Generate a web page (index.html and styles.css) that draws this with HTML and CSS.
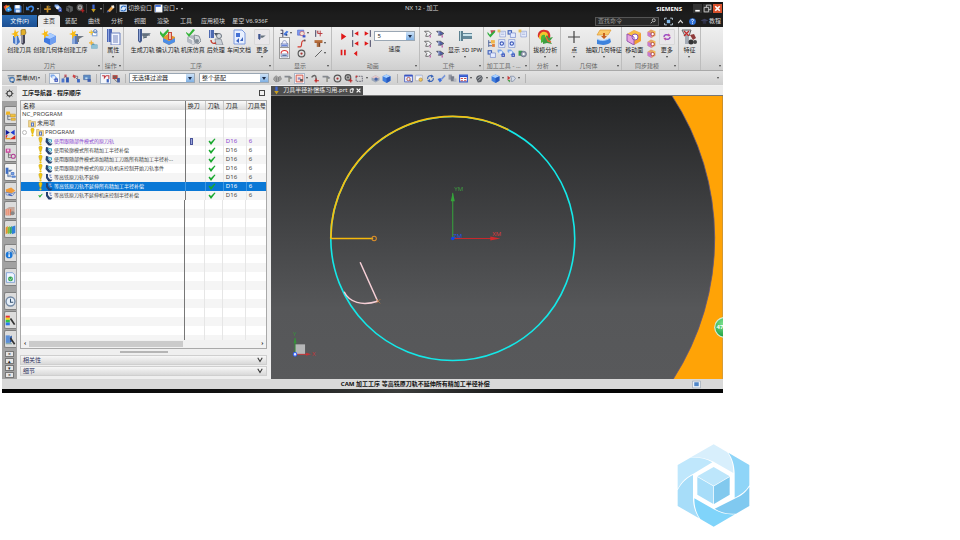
FILE: index.html
```html
<!DOCTYPE html>
<html lang="zh-CN">
<head>
<meta charset="utf-8">
<title>NX 12 - 加工</title>
<link rel="stylesheet" href="styles.css">
</head>
<body>
<svg class="defs" aria-hidden="true">
  <symbol id="nx" viewBox="0 0 16 16"><path d="M1 5 6 1l4 6-5 6z" fill="#e8442d"/><path d="M6 3l6-1-3 7-5 1z" fill="#f5a32a"/><path d="M5 8l7-4 4 7-6 3-5-1z" fill="#2f8fe0"/><path d="M8 8l4 1-3 3z" fill="#b9e2ff"/></symbol>
  <symbol id="save" viewBox="0 0 16 16"><path d="M2 2h11l2 2v11H2z" fill="#3f7fd6"/><path d="M4 2h8v6H4z" fill="#fff"/><path d="M5 10h7v5H5z" fill="#dbe8fa"/></symbol>
  <symbol id="undo" viewBox="0 0 16 16"><path d="M3 8c4-6 10-4 10 0 0 3-2 4-4 6" fill="none" stroke="#3d86e0" stroke-width="3"/><path d="M0 4v7h7z" fill="#3d86e0"/></symbol>
  <symbol id="paste" viewBox="0 0 16 16"><path d="M2 9h12M8 3v12" stroke="#c98f2a" stroke-width="3"/><path d="M9 2l5 3-5 3z" fill="#7a6a3a"/></symbol>
  <symbol id="pick" viewBox="0 0 16 16"><path d="M1 1h6l6 6v4H8L1 5z" fill="#7ea9ea"/><path d="M4 4h5v5H4z" fill="#e8effb"/><path d="M8 8h6v6H8z" fill="#3a52b8"/><path d="M10 10h2v2h-2z" fill="#fff"/></symbol>
  <symbol id="dark" viewBox="0 0 16 16"><path d="M2 5l5-3 7 3v7l-5 3-7-3z" fill="#595c5e"/><path d="M2 5l6 3v7" stroke="#303234" fill="none" stroke-width="2"/></symbol>
  <symbol id="target" viewBox="0 0 16 16"><circle cx="8" cy="8" r="6" fill="none" stroke="#555" stroke-width="2"/><circle cx="8" cy="8" r="2" fill="#a33"/></symbol>
  <symbol id="targetplus" viewBox="0 0 16 16"><circle cx="7" cy="6" r="5" fill="#aaa" stroke="#555" stroke-width="2"/><path d="M12 8v7M8 12h7" stroke="#b22" stroke-width="2"/><path d="M5 6h4M7 4v4" stroke="#333"/></symbol>
  <symbol id="pin" viewBox="0 0 16 16"><path d="M6 1h4v8H6z" fill="#4068d0"/><path d="M4 9h8l-4 6z" fill="#c9a020"/></symbol>
  <symbol id="brush" viewBox="0 0 16 16"><path d="M2 13 10 4l4 3-7 7z" fill="#e8a24a"/><path d="M9 3l5-1 1 4-3 2z" fill="#f6ede0"/><path d="M1 15l5-1-3-3z" fill="#4a68b0"/></symbol>
  <symbol id="switchwin" viewBox="0 0 16 16"><path d="M1 1h13v13H1z" fill="#dceafa"/><path d="M4 8a4 4 0 0 1 7-3M12 8a4 4 0 0 1-7 3" stroke="#2c6cc4" stroke-width="2" fill="none"/><path d="M10 3h3v4zM6 13H3V9z" fill="#2c6cc4"/></symbol>
  <symbol id="win" viewBox="0 0 16 16"><path d="M1 1h14v14H1z" fill="#fff"/><path d="M2 2h10v12H2z" fill="#2d62d8"/><path d="M3 5h10v9H3z" fill="#fff"/></symbol>

  <symbol id="newtool" viewBox="0 0 16 16"><path d="M10 1l4-1 1 4-2 3h-3z" fill="#e3b02c" stroke="#745b1c" stroke-width=".6"/><path d="M10 6h4v8l-2 2-2-2z" fill="#445" /><path d="M11 6v8" stroke="#dde"/><path d="M2 7h5l2 6-3 3-4-2z" fill="#4a79c8"/><path d="M4 6h2v9H4z" fill="#a7c2ea"/><path d="M4 0l1 3 3-1-2 3 2 2-3 0-2 2 0-3-3-1 3-1z" fill="#f8bb16"/></symbol>
  <symbol id="newgeo" viewBox="0 0 16 16"><path d="M4 8l6-4 6 3v6l-6 3-6-3z" fill="#3f79e0"/><path d="M4 8l6-4 6 3-6 3z" fill="#a9ccff"/><path d="M10 10l6-3v6l-6 3z" fill="#6e9ef0"/><path d="M4 0l1 3 3-1-1 3 2 2-3 0-2 3 0-4-3-1 3-1z" fill="#f8bb16"/></symbol>
  <symbol id="newop" viewBox="0 0 16 16"><path d="M7 5h3v10H7z" fill="#5576b8"/><path d="M9 7h7l-5 3v3H9z" fill="#707984"/><path d="M4 6l3 1v8H4z" fill="#8aa8dc"/><path d="M4 0l1 3 3-1-1 3 2 2-3 0-2 3 0-4-3-1 3-1z" fill="#f8bb16"/></symbol>
  <symbol id="method" viewBox="0 0 16 16"><path d="M5 4h10v9H5z" fill="#88a8d8"/><path d="M7 7h6v4H7z" fill="#fff"/><circle cx="11" cy="4" r="3" fill="none" stroke="#4f77b8" stroke-width="1.5"/><path d="M4 2v8M0 6h8" stroke="#f2c235" stroke-width="2"/></symbol>
  <symbol id="folder" viewBox="0 0 16 16"><path d="M4 6h5l1 2h5v7H4z" fill="#5c9bb8"/><path d="M4 9h11v6H4z" fill="#8fc0d4"/><path d="M4 1v8M0 5h8" stroke="#f2b235" stroke-width="2"/></symbol>
  <symbol id="props" viewBox="0 0 16 16"><path d="M2 0h5v13H2z" fill="#4b65b4"/><path d="M3 0h1v13H3z" fill="#8ea6e2"/><path d="M6 4h9v12H6z" fill="#f3f6ff" stroke="#6b81c0"/><path d="M8 7h5M8 9h5M8 11h5M8 13h5" stroke="#7182bb"/></symbol>
  <symbol id="gen" viewBox="0 0 16 16"><path d="M3 0h4v12l-2 2-2-2z" fill="#42598e"/><path d="M4 0h1v12H4z" fill="#91a7d8"/><path d="M7 4h9l-5 4H8z" fill="#7c8894"/><path d="M7 6l8 0M8 9l4-1" stroke="#4a5866"/></symbol>
  <symbol id="verify" viewBox="0 0 16 16"><path d="M3 8l5-3 7 3v5l-6 3-6-3z" fill="#e39b32"/><path d="M3 9l6 3 6-3v4l-6 3-6-3z" fill="#4d8ee6"/><path d="M8 3h4v8H8z" fill="#c94b3c"/><path d="M9 4h2v6H9z" fill="#efc0b0"/><path d="M0 2l3 3 5-5 1 2-6 7-3-4z" fill="#35b53a"/></symbol>
  <symbol id="simul" viewBox="0 0 16 16"><path d="M2 8l5-2 6 3v5l-5 2-6-3z" fill="#b4bac2"/><path d="M4 9l4 2v4" stroke="#fff" fill="none"/><path d="M9 6l5 1 2 5-3 3-3-2z" fill="#d4dade" stroke="#67707a" stroke-width=".7"/><circle cx="12" cy="12" r="2" fill="#818c97"/><path d="M1 3l3 2 4-5 2 1-6 7-3-4z" fill="#35b53a"/></symbol>
  <symbol id="post" viewBox="0 0 16 16"><path d="M1 1h5v8H1z" fill="#4c69b0"/><path d="M2 1h1v8H2z" fill="#a9bbea"/><path d="M6 4h6l-4 3z" fill="#4b5662"/><circle cx="11" cy="7" r="2.5" fill="#d6dbe0" stroke="#6b7580"/><path d="M7 10h6l2 6H8z" fill="#c9cfd6" stroke="#7b838c" stroke-width=".7"/><path d="M3 11c0 3 2 4 5 3" stroke="#c03a2c" fill="none" stroke-width="1.4"/></symbol>
  <symbol id="shopdoc" viewBox="0 0 16 16"><path d="M3 1h8l3 3v11H3z" fill="#e8f0ff" stroke="#7c9ade"/><path d="M5 4h4v4H5z" fill="#4471d4"/><path d="M5 12l3-3v5zM12 8l-3 4h3z" fill="#3d64c0"/></symbol>
  <symbol id="moreop" viewBox="0 0 16 16"><path d="M3 4h3v6l-1 2-2-2z" fill="#3e5590"/><path d="M6 6h7l-4 3H6z" fill="#66727e"/></symbol>
  <symbol id="path" viewBox="0 0 16 16"><path d="M1 2h4v12M1 8h4" stroke="#335" stroke-width="1.6" fill="none"/><path d="M6 9l6-6 3 2-6 7z" fill="#4a7be0"/><path d="M10 9h3v3h-3z" fill="#248"/></symbol>
  <symbol id="layers" viewBox="0 0 16 16"><path d="M1 2h11v9H1z" fill="#7d9cf0" stroke="#4a5fc8"/><circle cx="9" cy="8" r="4" fill="#f3e3d0" stroke="#c03a52"/><path d="M10 11h5v4h-5z" fill="#3b55cc"/></symbol>
  <symbol id="redpath" viewBox="0 0 16 16"><path d="M3 2v12" stroke="#335" stroke-width="1.600"/><path d="M11 3v10M6 8h9" stroke="#b83238" stroke-width="1.600"/><path d="M5 3h3v4H5z" fill="#b85a60"/></symbol>
  <symbol id="tray" viewBox="0 0 16 16"><path d="M2 8h12v6H2z" fill="#cfd8ee" stroke="#4c5f96"/><path d="M4 8c0-7 8-7 8 0" fill="#eef" stroke="#60719f"/><path d="M3 11h10" stroke="#4a6ad0" stroke-width="2"/></symbol>
  <symbol id="trayred" viewBox="0 0 16 16"><path d="M2 8h12v6H2z" fill="#dfe4f2" stroke="#4c5f96"/><path d="M2 8c0-7 12-7 12 0" fill="#fff" stroke="#d33" stroke-width="2"/><path d="M4 11h8" stroke="#34508e" stroke-width="2"/></symbol>
  <symbol id="curve" viewBox="0 0 16 16"><path d="M1 14h5c4 0 0-11 5-11h4" fill="none" stroke="#d33b30" stroke-width="2"/><path d="M12 1h3v3h-3z" fill="#555"/></symbol>
  <symbol id="drill" viewBox="0 0 16 16"><path d="M1 2h14v5H1z" fill="#a95a2a"/><path d="M2 3h12v1H2z" fill="#e6b070"/><path d="M5 7h6v7H5z" fill="#7b4526"/><path d="M6 7h2v7H6z" fill="#cf8b55"/></symbol>
  <symbol id="line" viewBox="0 0 16 16"><path d="M2 14 14 2" stroke="#555" stroke-width="1.6"/></symbol>
  <symbol id="play" viewBox="0 0 16 16"><path d="M4 2l9 6-9 6z" fill="#e01818"/></symbol>
  <symbol id="back" viewBox="0 0 16 16"><path d="M11 3 5 8l6 5z" fill="#e01818"/></symbol>
  <symbol id="pause" viewBox="0 0 16 16"><path d="M3 3h3v10H3zM9 3h3v10H9z" fill="#e01818"/></symbol>
  <symbol id="first" viewBox="0 0 16 16"><path d="M3 2v12" stroke="#335" stroke-width="1.6"/><path d="M13 4 6 8l7 4z" fill="#e01818"/></symbol>
  <symbol id="last" viewBox="0 0 16 16"><path d="M13 2v12" stroke="#335" stroke-width="1.6"/><path d="M3 4l7 4-7 4z" fill="#e01818"/></symbol>
  <symbol id="holder" viewBox="0 0 16 16"><path d="M1 4h7l5 4-5 5H3l2-5z" fill="#f1f2f4" stroke="#444" stroke-width="1.3"/><path d="M11 11v4" stroke="#b2479c" stroke-width="2"/></symbol>
  <symbol id="holderb" viewBox="0 0 16 16"><path d="M1 4h7l6 4-5 3H4l1-3z" fill="#5362a8" stroke="#333" stroke-width="1"/><path d="M4 4h2v6H4z" fill="#a5b2e2"/><path d="M11 11v4" stroke="#b2479c" stroke-width="2"/></symbol>
  <symbol id="ipw" viewBox="0 0 16 16"><path d="M2 2h4v10H2z" fill="#5b8090"/><path d="M3 2h1v10H3z" fill="#b8d8e0"/><path d="M6 4h9v6H6z" fill="#64899a"/><path d="M6 5h9v2H6z" fill="#c7e2ea"/></symbol>
  <symbol id="checkg" viewBox="0 0 16 16"><path d="M6 2l9 0-2 4-5 3z" fill="#c04b56"/><path d="M1 5l4 5L13 3l2 2-9 10-5-6z" fill="#2fae3d"/></symbol>
  <symbol id="sheet" viewBox="0 0 16 16"><path d="M5 4h10v10H5z" fill="#eef3ff" stroke="#7388c8"/><path d="M7 7h6M7 10h6" stroke="#8898cc"/><path d="M1 1h5v5H1z" fill="#e5be56"/></symbol>
  <symbol id="tree" viewBox="0 0 16 16"><path d="M3 2v12M3 6h6M3 12h6" stroke="#496199" stroke-width="1.6" fill="none"/><path d="M7 2h7v6H7z" fill="#f1b64a"/><path d="M9 9h5v5H9z" fill="#e07e38"/></symbol>
  <symbol id="twobox" viewBox="0 0 16 16"><path d="M1 2h8v8H1z" fill="#4464b8"/><path d="M3 4h4v4H3z" fill="#c9d6fa"/><path d="M6 7h9v8H6z" fill="#e5ecff" stroke="#5973c4"/></symbol>
  <symbol id="refreshdoc" viewBox="0 0 16 16"><path d="M3 1h11v14H3z" fill="#e8efff" stroke="#6a80c8"/><circle cx="8.500" cy="8" r="3" fill="none" stroke="#3c58b8" stroke-width="2"/></symbol>
  <symbol id="gears" viewBox="0 0 16 16"><path d="M1 3h7v9H1z" fill="#3c9b52"/><circle cx="10" cy="9" r="5" fill="#9aa4b4" stroke="#444f6c"/><circle cx="10" cy="9" r="2" fill="#fff"/></symbol>
  <symbol id="draft" viewBox="0 0 16 16"><path d="M1 8C0 3 4 0 8 1c5 0 6 5 5 8l-5 5z" fill="#d9322c"/><path d="M2 9c0-4 3-7 6-6 3 0 4 4 2 7l-4 3z" fill="#f5c52c"/><path d="M4 9c0-3 2-4 4-3v6l-4 2z" fill="#49b838"/><path d="M6 11l4-5 2 3 4-1-3 4 2 3-5-1-4 1z" fill="#3f9e45"/><path d="M9 8l2 4 3 1" stroke="#eb6b35" stroke-width="1.5" fill="none"/></symbol>
  <symbol id="plus" viewBox="0 0 16 16"><path d="M8 2v12M2 8h12" stroke="#444" stroke-width="1.2"/></symbol>
  <symbol id="extract" viewBox="0 0 16 16"><path d="M4 1h11l-3 5H1z" fill="#f9c96a" stroke="#e09a35" stroke-width=".7"/><path d="M7 4h2v3h2L8 10 5 7h2z" fill="#c8601e"/><path d="M1 10c3 2 9 2 13-1l1 4c-4 4-10 3-14 2z" fill="#3e83dc"/><path d="M1 10c3 2 9 2 13-1" stroke="#a6d0ff" fill="none"/></symbol>
  <symbol id="moveface" viewBox="0 0 16 16"><path d="M1 5l7-4 7 3v8l-7 4-7-4z" fill="#e7a3e0"/><path d="M1 5l7-4 7 3-7 4z" fill="#f7bd44"/><path d="M8 8v8l7-4V4z" fill="#f2a02f"/><circle cx="9" cy="8" r="3" fill="#fff" stroke="#8953b8"/><path d="M1 5l7 3v8l-7-4z" fill="none" stroke="#9655b0"/></symbol>
  <symbol id="face" viewBox="0 0 16 16"><path d="M1 5l6-4 8 3v8l-7 4-7-4z" fill="#e5a06a"/><path d="M1 5l7 3v8l-7-4z" fill="#c57bd0"/><path d="M8 5l6-2v7z" fill="#f4c94c"/><circle cx="10" cy="9" r="3" fill="#fff" stroke="#b03a3a" stroke-width="1.500"/></symbol>
  <symbol id="swirl" viewBox="0 0 16 16"><path d="M4 8c0-3 4-4 7-2M12 8c0 3-4 4-7 2" stroke="#9b4fc4" stroke-width="2" fill="none"/><path d="M10 3l3 4-4 0zM6 13l-3-4 4 0z" fill="#c04fa4"/></symbol>
  <symbol id="feature" viewBox="0 0 16 16"><path d="M1 1h9l-2 6H4z" fill="#d8dbe0" stroke="#666"/><path d="M3 2l5 5M8 2 3 7" stroke="#c22d2d" stroke-width="1.300"/><path d="M4 7h4v8H4z" fill="#a5acb6"/><path d="M9 6l4-1 2 4-3 2z" fill="#8f3b3b"/><circle cx="10" cy="13" r="2.500" fill="#333"/><circle cx="14" cy="13" r="2" fill="#444"/></symbol>

  <symbol id="menu" viewBox="0 0 16 16"><path d="M1 3h12M2 7h8" stroke="#678" stroke-width="2"/><circle cx="9" cy="10" r="4" fill="none" stroke="#467ab8" stroke-width="2"/><path d="M9 14l3 2" stroke="#456" stroke-width="2"/></symbol>
  <symbol id="nodes" viewBox="0 0 16 16"><path d="M1 8h5v7H1z" fill="#4b75ce"/><path d="M9 6h5v9H9z" fill="#2e58b4"/><path d="M6 1h4v5H6z" fill="#c65a65"/><path d="M4 8l4-4 4 4" stroke="#556" fill="none"/></symbol>
  <symbol id="nodered" viewBox="0 0 16 16"><path d="M2 1l5 2-2 5-4-3z" fill="#cf4646"/><path d="M6 6l8 8M6 4h4v5" stroke="#667" fill="none" stroke-width="1.400"/><path d="M9 9h5v6H9z" fill="#3d68c4"/></symbol>
  <symbol id="screenpick" viewBox="0 0 16 16"><path d="M1 2h12v8H1z" fill="#5d8cc4" stroke="#456aa0"/><path d="M4 6h4v3H4z" fill="#bdd8f0"/><path d="M8 9h6v5H8z" fill="#3f5eae"/></symbol>
  <symbol id="zig" viewBox="0 0 16 16"><path d="M2 3h4v4l3-4h5v6" stroke="#c23a42" stroke-width="1.800" fill="none"/><path d="M10 9h4v6h-4z" fill="#3d62bc"/></symbol>
  <symbol id="zig2" viewBox="0 0 16 16"><path d="M1 2h9v7H1z" fill="#b3453f"/><path d="M3 4h4v3H3z" fill="#666"/><path d="M9 7h5v8H9z" fill="#4660a4"/><path d="M4 9l5 5" stroke="#666" stroke-width="1.500"/></symbol>
  <symbol id="hand" viewBox="0 0 16 16"><path d="M2 6l4-3 3 3 4-2 2 5-4 4-6 1-4-4z" fill="#a5a5a5" stroke="#777"/><path d="M6 6v7M10 6v6" stroke="#666"/></symbol>
  <symbol id="hammer" viewBox="0 0 16 16"><path d="M1 3h9l5 4-3 2-5-3H1z" fill="#868a90"/><path d="M9 6v8" stroke="#8a8a80" stroke-width="2.500"/></symbol>
  <symbol id="selbox" viewBox="0 0 16 16"><path d="M2 2h12v12H2z" fill="#f9ded8" stroke="#d04a3a" stroke-width="1.500"/><path d="M5 6h5v4H5z" fill="#8f8fc0"/><path d="M9 9h5v4H9z" fill="#555"/></symbol>
  <symbol id="bend" viewBox="0 0 16 16"><path d="M1 6c4-5 8-4 8 1v6" stroke="#666" fill="none" stroke-width="2.500"/><path d="M9 8v7M6 12h8" stroke="#c22" stroke-width="2"/></symbol>
  <symbol id="dash" viewBox="0 0 16 16"><path d="M2 4h11v9H2z" fill="none" stroke="#556" stroke-width="1.500" stroke-dasharray="3 1.500"/><path d="M1 3h3v3H1z" fill="#c33"/></symbol>
  <symbol id="cyl" viewBox="0 0 16 16"><path d="M1 6l7-4 7 4v5l-7 4-7-4z" fill="#9aa6b8"/><path d="M1 6l7-4 7 4-7 3z" fill="#e5c8c8"/><circle cx="9" cy="9" r="3" fill="#4964a8"/></symbol>
  <symbol id="cube" viewBox="0 0 16 16"><path d="M1 4l7-3 7 3v8l-7 4-7-4z" fill="#3f7fe0"/><path d="M1 4l7-3 7 3-7 3z" fill="#a8d0ff"/><path d="M8 7l7-3v8l-7 4z" fill="#2859be"/></symbol>
  <symbol id="fit" viewBox="0 0 16 16"><path d="M1 2h14v12H1z" fill="#eaf0ff" stroke="#4960c0" stroke-width="1.500"/><path d="M1 3h14" stroke="#3b55c4" stroke-width="3"/><circle cx="8" cy="9" r="3" fill="none" stroke="#b0483c" stroke-width="1.500"/><path d="M10 11l4 3" stroke="#555" stroke-width="1.500"/></symbol>
  <symbol id="zoomwin" viewBox="0 0 16 16"><path d="M1 2h12v10H1z" fill="#f8f8fb" stroke="#99a"/><circle cx="10" cy="10" r="3" fill="#f2c861" stroke="#a87e28"/><path d="M2 3h10" stroke="#b4c6e8" stroke-width="2"/></symbol>
  <symbol id="rotate" viewBox="0 0 16 16"><path d="M3 9a5 5 0 0 1 8-5M13 7a5 5 0 0 1-8 5" stroke="#3a65b8" stroke-width="2" fill="none"/><path d="M9 1l5 3-5 3zM7 15l-5-3 5-3z" fill="#3a65b8"/></symbol>
  <symbol id="paint" viewBox="0 0 16 16"><path d="M1 9l5-2 3 4-4 4z" fill="#3c70e0"/><path d="M7 8l7-7 1 3-6 6z" fill="#7695d8"/></symbol>
  <symbol id="stack" viewBox="0 0 16 16"><path d="M1 1h6v9H1z" fill="#9599a4"/><path d="M5 4h6v9H5z" fill="#787d8a"/><path d="M10 8h5v6h-5z" fill="#b4b8c2"/></symbol>
  <symbol id="grid" viewBox="0 0 16 16"><path d="M1 2h14v12H1z" fill="#fff" stroke="#3a5fd0" stroke-width="2"/><path d="M1 4h14" stroke="#2f55cc" stroke-width="3"/><path d="M3 7h4v2H3zM9 7h4v2H9zM3 11h4v2H3zM9 11h4v2H9z" fill="#c74c4c"/></symbol>
  <symbol id="shade" viewBox="0 0 16 16"><path d="M2 8c0-5 6-7 10-5l2 4-3 7-6 1z" fill="#5a5e64"/><path d="M4 8l6-4M6 12l6-5" stroke="#c6cacf" stroke-width="1.500"/></symbol>
  <symbol id="tagicon" viewBox="0 0 16 16"><path d="M1 3l5 4-5 4z" fill="#c73737"/><path d="M1 11l4-1v5z" fill="#3c9b3c"/><path d="M6 4h6l3 4-4 5H7l1-5z" fill="#d3dbe8" stroke="#607090"/></symbol>

  <symbol id="gear" viewBox="0 0 16 16"><circle cx="8" cy="8" r="4.500" fill="none" stroke="#444" stroke-width="2"/><path d="M8 1v3M8 12v3M1 8h3M12 8h3M3 3l2 2M11 11l2 2M13 3l-2 2M5 11l-2 2" stroke="#444" stroke-width="1.500"/></symbol>
  <symbol id="r-asm" viewBox="0 0 16 16"><path d="M2 2h5l1 5H1z" fill="#efb322"/><path d="M4 7v7h4M4 9h4" stroke="#456" fill="none"/><path d="M8 6h7v4H8zM9 12h6v3H9z" fill="#f2c33d" stroke="#b98314" stroke-width=".7"/></symbol>
  <symbol id="r-con" viewBox="0 0 16 16"><path d="M1 1l6 4-6 4z" fill="#111b9a"/><path d="M14 1 8 5l6 4z" fill="#1e3ad0"/><path d="M1 15V9h3zM7 15l8-6v6z" fill="#d8241c"/><path d="M1 13h7v2H1z" fill="#e5a21a"/></symbol>
  <symbol id="r-part" viewBox="0 0 16 16"><path d="M1 1h7v6H1z" fill="#c8489c"/><path d="M3 2h3v3H3z" fill="#f0c9e4"/><path d="M5 7v7h4M5 10h4" stroke="#555" fill="none"/><circle cx="12" cy="12" r="3" fill="none" stroke="#b03a92" stroke-width="1.500"/></symbol>
  <symbol id="r-op" viewBox="0 0 16 16"><path d="M1 1h4v9H1z" fill="#3f6ec4"/><path d="M5 4h6l-3 3H5z" fill="#5f7fa8"/><path d="M4 9v5h5M4 12h5" stroke="#4b6a9a" fill="none"/><path d="M9 8h4v3H9zM10 13h5v2h-5z" fill="#78a2e2" stroke="#3f6ec4"/></symbol>
  <symbol id="r-mach" viewBox="0 0 16 16"><path d="M1 5l8-3 6 5-5 3H2z" fill="#ef9a38"/><path d="M1 9l9 2 5-2-4 5-9-1z" fill="#d8dce4" stroke="#5a75b4"/><path d="M5 12l5 2" stroke="#3e63c0" stroke-width="2"/></symbol>
  <symbol id="r-role" viewBox="0 0 16 16"><path d="M1 6l5-3h8v9l-5 3H1z" fill="#c3a89d"/><path d="M1 6h8v9H1z" fill="#df6e4a"/><path d="M3 6v9M6 6v9" stroke="#fff"/><circle cx="11" cy="12" r="3" fill="#888"/></symbol>
  <symbol id="r-book" viewBox="0 0 16 16"><path d="M1 5l3-2v10l-3 2z" fill="#e9902a"/><path d="M4 5l3-2v10l-3 2z" fill="#7fbf3c"/><path d="M7 5l3-2v10l-3 2z" fill="#37a66a"/><path d="M10 4l5-2v11l-5 2z" fill="#2f7fd8"/></symbol>
  <symbol id="r-info" viewBox="0 0 16 16"><circle cx="6" cy="10" r="5" fill="#1c78d8"/><path d="M6 9v4M6 6v2" stroke="#fff" stroke-width="2"/><path d="M8 4c3 0 4 2 4 5M8 1c5 0 7 3 7 8" stroke="#5a86b8" stroke-width="1.500" fill="none"/></symbol>
  <symbol id="r-doc" viewBox="0 0 16 16"><path d="M2 1h9l3 3v11H2z" fill="#eef4ff" stroke="#5c8bd0"/><circle cx="8" cy="10" r="3.500" fill="#2f9f4c"/><path d="M6 9l2 3 2-4" stroke="#c3ecd0" fill="none"/></symbol>
  <symbol id="r-clock" viewBox="0 0 16 16"><circle cx="8" cy="8" r="6.500" fill="#e5eef8" stroke="#7389a4" stroke-width="2"/><path d="M8 4v5h4" stroke="#33506e" stroke-width="1.500" fill="none"/></symbol>
  <symbol id="r-color" viewBox="0 0 16 16"><path d="M1 1h6v3H1z" fill="#e83030"/><path d="M1 4h6v3H1z" fill="#f4d51e"/><path d="M1 7h6v4H1z" fill="#2fc64a"/><path d="M1 11h6v4H1z" fill="#2a78f0"/><path d="M8 5l6 9" stroke="#333" stroke-width="2.500"/></symbol>
  <symbol id="r-cube" viewBox="0 0 16 16"><path d="M1 2h6v11H1z" fill="#5b8fd8"/><path d="M7 4l3-2v9l-3 2z" fill="#2e5ca8"/><path d="M8 6l6 9" stroke="#333" stroke-width="2.500"/><path d="M1 13h9v2H1z" fill="#8aa"/></symbol>

  <symbol id="bang" viewBox="0 0 8 16"><path d="M1 3a3 3 0 0 1 6 0L5 10H3z" fill="#f4c80e" stroke="#b8920a" stroke-width=".7"/><circle cx="4" cy="13" r="2" fill="#f4c80e"/></symbol>
  <symbol id="tick" viewBox="0 0 16 16"><path d="M1 8l2-2 3 3 7-7 2 1-9 12z" fill="#18a82e"/></symbol>
  <symbol id="fold" viewBox="0 0 16 16"><path d="M1 2h5l2 2h7v11H1z" fill="#f1d58a" stroke="#c2a050"/><path d="M6 6h6v8H6z" fill="#5a78c4"/><path d="M8 8h2v4H8z" fill="#dfe6fa"/></symbol>
  <symbol id="mill" viewBox="0 0 16 16"><path d="M2 1l5 1-1 5 4 5 5 0-3 4H7L1 9z" fill="#24416e"/><path d="M5 5l3-2 6 1v5l-4 2z" fill="#42a7c4"/><path d="M8 5l4 1v3l-3-1z" fill="#dff3f8"/></symbol>
  <symbol id="zlevel" viewBox="0 0 16 16"><path d="M2 1l4 0 0 6 4 5 5 0-3 4H7L2 9z" fill="#26406e"/><path d="M8 2h5l-1 4H9zM10 7h4v2h-4z" fill="#8a9ed0"/></symbol>
  <symbol id="chev" viewBox="0 0 8 8"><path d="M1 1l3 5 3-5" fill="none" stroke="#333" stroke-width="1.400"/></symbol>
</svg>

<div class="app">
  <header class="titlebar">
    <div class="quick">
      <svg class="s"><use href="#nx"/></svg>
      <button aria-label="保存"><svg class="s"><use href="#save"/></svg></button><i class="bar"></i>
      <button aria-label="撤销"><svg class="s"><use href="#undo"/></svg></button><i class="caret"></i><i class="bar"></i>
      <button aria-label="粘贴"><svg class="s"><use href="#paste"/></svg></button>
      <button aria-label="选择"><svg class="s"><use href="#pick"/></svg></button>
      <button aria-label="体"><svg class="s"><use href="#dark"/></svg></button>
      <button aria-label="定位"><svg class="s"><use href="#targetplus"/></svg></button><i class="bar"></i>
      <button aria-label="刀具"><svg class="s"><use href="#pin"/></svg></button><i class="caret"></i><i class="bar"></i>
      <button aria-label="画笔"><svg class="s"><use href="#brush"/></svg></button><i class="bar"></i>
      <button><svg class="s"><use href="#switchwin"/></svg>切换窗口</button>
      <button><svg class="s"><use href="#win"/></svg>窗口<i class="caret"></i></button><i class="caret"></i>
    </div>
    <h1>NX 12 - 加工</h1>
    <div class="winctl">
      <strong>SIEMENS</strong>
      <button aria-label="最小化"><svg viewBox="0 0 8 8"><path d="M2 6h4" stroke="#fff" stroke-width="1.500"/></svg></button>
      <button aria-label="还原"><svg viewBox="0 0 8 8"><path d="M1 3h4v4H1zM3 3V1h4v4H5" fill="none" stroke="#ddd" stroke-width=".7"/></svg></button>
      <button class="close" aria-label="关闭"><svg viewBox="0 0 8 8"><path d="M2 2l4 4M6 2 2 6" stroke="#fff" stroke-width="1.500"/></svg></button>
    </div>
  </header>

  <nav class="tabs">
    <button class="file">文件(F)</button>
    <button class="on">主页</button>
    <button>装配</button><button>曲线</button><button>分析</button><button>视图</button><button>渲染</button><button>工具</button>
    <button class="wide">应用模块</button><button class="wider">星空 V6.936F</button>
    <div class="tabs-end">
      <label class="find"><input type="text" placeholder="查找命令" aria-label="查找命令"><svg viewBox="0 0 8 8"><circle cx="5" cy="3" r="2" fill="none" stroke="#ddd"/><path d="M3 5 1 7" stroke="#ddd"/></svg></label>
      <button aria-label="全屏"><svg class="s" viewBox="0 0 16 16"><path d="M5 5h6v6H5z" fill="#7fb8ea"/><path d="M1 5V2h4M11 2h4v3M15 11v3h-4M5 14H1v-3" fill="none" stroke="#d0e4f4" stroke-width="1.500"/></svg></button>
      <button aria-label="折叠"><svg class="s" viewBox="0 0 16 16"><path d="M4 11l4-5 4 5" fill="none" stroke="#ddd" stroke-width="2"/></svg></button>
      <button aria-label="帮助"><svg class="s" viewBox="0 0 16 16"><circle cx="8" cy="8" r="6" fill="#2d6fd6"/><path d="M6 6c0-3 5-2 4 0-1 1-2 1-2 3M8 10v2" stroke="#fff" stroke-width="1.500" fill="none"/></svg></button>
      <button><svg class="s" viewBox="0 0 16 16"><path d="M1 6l7-3 7 3-7 3z" fill="#3c3f5c"/><path d="M5 8v4h6V8" fill="#2c2e44"/></svg>教程</button>
    </div>
  </nav>

  <section class="ribbon">
    <div class="group g-blade">
      <div class="body">
        <button class="tool w30"><svg><use href="#newtool"/></svg>创建刀具</button>
        <button class="tool w28"><svg><use href="#newgeo"/></svg>创建几何体</button>
        <button class="tool w28"><svg><use href="#newop"/></svg>创建工序</button>
        <div class="stack"><button aria-label="创建方法"><svg class="s"><use href="#method"/></svg></button><button aria-label="创建程序"><svg class="s"><use href="#folder"/></svg></button></div>
      </div>
      <div class="cap">刀片<i class="caret"></i></div>
    </div>
    <div class="group g-oper">
      <div class="body"><button class="tool w28"><svg><use href="#props"/></svg>属性<i class="caret"></i></button></div>
      <div class="cap">操作<i class="caret"></i></div>
    </div>
    <div class="group g-proc">
      <div class="body">
        <button class="tool w28"><svg><use href="#gen"/></svg>生成刀轨</button>
        <button class="tool w28"><svg><use href="#verify"/></svg>确认刀轨</button>
        <button class="tool w28"><svg><use href="#simul"/></svg>机床仿真</button>
        <button class="tool w24"><svg><use href="#post"/></svg>后处理</button>
        <button class="tool w28"><svg><use href="#shopdoc"/></svg>车间文档</button>
        <button class="tool w24 soft"><svg><use href="#moreop"/></svg>更多<i class="caret"></i></button>
      </div>
      <div class="cap">工序<i class="caret"></i></div>
    </div>
    <div class="group g-show">
      <div class="mini three">
        <button aria-label="编辑显示"><svg class="s"><use href="#path"/></svg><i class="caret"></i></button>
        <button aria-label="图层"><svg class="s"><use href="#layers"/></svg><i class="caret"></i></button>
        <button aria-label="刀轨"><svg class="s"><use href="#redpath"/></svg></button>
        <button class="boxed" aria-label="显示刀轨"><svg class="s"><use href="#tray"/></svg></button>
        <button aria-label="曲线"><svg class="s"><use href="#curve"/></svg></button>
        <button aria-label="刀具显示"><svg class="s"><use href="#drill"/></svg><i class="caret"></i></button>
        <button class="boxed" aria-label="显示进刀"><svg class="s"><use href="#trayred"/></svg></button>
        <button aria-label="中心"><svg class="s"><use href="#target"/></svg></button>
        <button aria-label="直线"><svg class="s"><use href="#line"/></svg><i class="caret"></i></button>
      </div>
      <div class="cap">显示<i class="caret"></i></div>
    </div>
    <div class="group g-anim">
      <div class="body">
        <div class="playcol"><button aria-label="播放"><svg class="s"><use href="#play"/></svg></button><button aria-label="暂停"><svg class="s"><use href="#pause"/></svg></button></div>
        <div class="mini two">
          <button aria-label="首个"><svg class="s"><use href="#first"/></svg></button><button aria-label="末个"><svg class="s"><use href="#last"/></svg></button>
          <button aria-label="上一步"><svg class="s"><use href="#first"/></svg></button><button aria-label="下一步"><svg class="s"><use href="#last"/></svg></button>
          <button aria-label="倒放"><svg class="s"><use href="#back"/></svg></button>
        </div>
        <div class="speed"><span class="combo"><select id="speed"><option>5</option></select></span><label for="speed">速度</label></div>
      </div>
      <div class="cap">动画<i class="caret"></i></div>
    </div>
    <div class="group g-work">
      <div class="body">
        <div class="mini two">
          <button aria-label="装夹 1"><svg class="s"><use href="#holder"/></svg></button><button aria-label="装夹 2"><svg class="s"><use href="#holderb"/></svg></button>
          <button aria-label="装夹 3"><svg class="s"><use href="#holder"/></svg></button><button aria-label="装夹 4"><svg class="s"><use href="#holderb"/></svg></button>
          <button aria-label="装夹 5"><svg class="s"><use href="#holder"/></svg></button><button aria-label="装夹 6"><svg class="s"><use href="#holderb"/></svg></button>
        </div>
        <button class="tool w28"><svg><use href="#ipw"/></svg>显示 3D IPW<i class="caret"></i></button>
      </div>
      <div class="cap">工件<i class="caret"></i></div>
    </div>
    <div class="group g-tools">
      <div class="mini four">
        <button aria-label="检查"><svg class="s"><use href="#checkg"/></svg></button><button aria-label="列表"><svg class="s"><use href="#sheet"/></svg></button><button aria-label="复制"><svg class="s"><use href="#twobox"/></svg></button><button aria-label="页面"><svg class="s"><use href="#sheet"/></svg></button>
        <button aria-label="结构"><svg class="s"><use href="#tree"/></svg></button><button aria-label="变换"><svg class="s"><use href="#refreshdoc"/></svg></button><button aria-label="更新"><svg class="s"><use href="#refreshdoc"/></svg></button><span></span>
        <button aria-label="对象"><svg class="s"><use href="#twobox"/></svg></button><button aria-label="路径"><svg class="s"><use href="#pick"/></svg></button><button aria-label="选择"><svg class="s"><use href="#pick"/></svg></button><button aria-label="设置"><svg class="s"><use href="#gears"/></svg></button>
      </div>
      <div class="cap">加工工具 - ...<i class="caret"></i></div>
    </div>
    <div class="group g-draft">
      <div class="body"><button class="tool w28"><svg><use href="#draft"/></svg>拔模分析<i class="caret"></i></button></div>
      <div class="cap">分析<i class="caret"></i></div>
    </div>
    <div class="group g-geo">
      <div class="body">
        <button class="tool w24"><svg><use href="#plus"/></svg>点<i class="caret"></i></button>
        <button class="tool w30"><svg><use href="#extract"/></svg>抽取几何特征<i class="caret"></i></button>
      </div>
      <div class="cap">几何体<i class="caret"></i></div>
    </div>
    <div class="group g-sync">
      <div class="body">
        <button class="tool w28"><svg><use href="#moveface"/></svg>移动面<i class="caret"></i></button>
        <div class="mini one"><button aria-label="拉出面"><svg class="s"><use href="#face"/></svg></button><button aria-label="偏置区域"><svg class="s"><use href="#face"/></svg></button><button aria-label="替换面"><svg class="s"><use href="#face"/></svg></button></div>
        <button class="tool w24 soft"><svg><use href="#swirl"/></svg>更多<i class="caret"></i></button>
      </div>
      <div class="cap">同步建模<i class="caret"></i></div>
    </div>
    <div class="group g-feat">
      <div class="body"><button class="tool w28"><svg><use href="#feature"/></svg>特征<i class="caret"></i></button></div>
      <div class="cap"></div>
    </div>
    <div class="group g-rest"><div class="body"></div><div class="cap"><i class="caret"></i></div></div>
  </section>

  <div class="toolbar">
    <button class="menu"><svg class="s"><use href="#menu"/></svg>菜单(M)<i class="caret"></i></button><i class="bar"></i>
    <button class="c boxed" aria-label="程序顺序视图"><svg class="s"><use href="#pick"/></svg></button>
    <button class="c" aria-label="机床视图"><svg class="s"><use href="#nodes"/></svg></button>
    <button class="c" aria-label="几何视图"><svg class="s"><use href="#nodered"/></svg></button>
    <button class="c" aria-label="加工方法视图"><svg class="s"><use href="#screenpick"/></svg></button><i class="bar"></i>
    <button class="c boxed" aria-label="刀轨选择"><svg class="s"><use href="#zig"/></svg></button>
    <button class="c" aria-label="刀轨过滤"><svg class="s"><use href="#zig2"/></svg></button><i class="bar"></i>
    <span class="combo filter"><select aria-label="选择过滤器"><option>无选择过滤器</option></select></span>
    <span class="combo scope"><select aria-label="选择范围"><option>整个装配</option></select></span>
    <button class="c" aria-label="抓取"><svg class="s"><use href="#hand"/></svg></button>
    <button class="c" aria-label="敲击"><svg class="s"><use href="#hammer"/></svg></button>
    <button class="c boxed" aria-label="框选"><svg class="s"><use href="#selbox"/></svg></button><i class="caret"></i>
    <button class="c" aria-label="弯曲"><svg class="s"><use href="#bend"/></svg></button>
    <button class="c" aria-label="修剪"><svg class="s"><use href="#hammer"/></svg></button>
    <button class="c" aria-label="圆心"><svg class="s"><use href="#target"/></svg></button>
    <button class="c" aria-label="捕捉"><svg class="s"><use href="#targetplus"/></svg></button>
    <button class="c" aria-label="矩形"><svg class="s"><use href="#dash"/></svg></button><i class="caret"></i>
    <button class="c" aria-label="圆柱"><svg class="s"><use href="#cyl"/></svg></button>
    <button class="c" aria-label="块"><svg class="s"><use href="#cube"/></svg></button><i class="bar gap"></i>
    <button class="c" aria-label="适合窗口"><svg class="s"><use href="#fit"/></svg></button>
    <button class="c" aria-label="缩放"><svg class="s"><use href="#zoomwin"/></svg></button>
    <button class="c" aria-label="旋转"><svg class="s"><use href="#rotate"/></svg></button>
    <button class="c" aria-label="着色"><svg class="s"><use href="#paint"/></svg></button>
    <button class="c" aria-label="叠放"><svg class="s"><use href="#stack"/></svg></button>
    <button class="c" aria-label="布局"><svg class="s"><use href="#grid"/></svg></button><i class="caret"></i>
    <button class="c" aria-label="渲染"><svg class="s"><use href="#shade"/></svg></button><i class="caret"></i>
    <button class="c" aria-label="视图方位"><svg class="s"><use href="#cube"/></svg></button><i class="caret"></i>
    <button class="c" aria-label="显示隐藏"><svg class="s"><use href="#tagicon"/></svg></button><i class="caret"></i><i class="bar"></i>
    <i class="caret last"></i>
  </div>

  <main class="work">
    <aside class="rail">
      <button class="gear" aria-label="设置"><svg class="s"><use href="#gear"/></svg></button>
      <button class="t" aria-label="装配导航器"><svg><use href="#r-asm"/></svg></button>
      <button class="t" aria-label="约束导航器"><svg><use href="#r-con"/></svg></button>
      <button class="t" aria-label="部件导航器"><svg><use href="#r-part"/></svg></button>
      <button class="t on" aria-label="工序导航器"><svg><use href="#r-op"/></svg></button>
      <button class="t" aria-label="加工特征"><svg><use href="#r-mach"/></svg></button>
      <button class="t" aria-label="机床导航器"><svg><use href="#r-role"/></svg></button>
      <button class="t" aria-label="重用库"><svg><use href="#r-book"/></svg></button>
      <button class="t far" aria-label="信息"><svg><use href="#r-info"/></svg></button>
      <button class="t far" aria-label="浏览器"><svg><use href="#r-doc"/></svg></button>
      <button class="t far" aria-label="历史记录"><svg><use href="#r-clock"/></svg></button>
      <button class="t" aria-label="颜色"><svg><use href="#r-color"/></svg></button>
      <button class="t" aria-label="角色"><svg><use href="#r-cube"/></svg></button>
      <div class="pager"><button>×</button><button>▴</button><button>▾</button><button>×</button></div>
    </aside>

    <section class="nav">
      <h2>工序导航器 - 程序顺序<button aria-label="最大化"></button></h2>
      <div class="grid">
        <table>
          <colgroup><col><col class="k1"><col class="k2"><col class="k3"><col class="k4"></colgroup>
          <thead><tr><th>名称</th><th>换刀</th><th>刀轨</th><th>刀具</th><th>刀具号</th></tr></thead>
          <tbody>
            <tr><td>NC_PROGRAM</td><td></td><td></td><td></td><td></td></tr>
            <tr><td class="in1"><svg class="s"><use href="#fold"/></svg>未用项</td><td></td><td></td><td></td><td></td></tr>
            <tr><td class="in0"><i class="exp"></i><svg class="b"><use href="#bang"/></svg><svg class="s"><use href="#fold"/></svg>PROGRAM</td><td></td><td></td><td></td><td></td></tr>
            <tr class="cur"><td class="in2"><svg class="b"><use href="#bang"/></svg><svg class="s"><use href="#mill"/></svg>使用跟随部件模式的原刀轨</td><td><i class="cutter"></i></td><td><svg class="s"><use href="#tick"/></svg></td><td>D16</td><td>6</td></tr>
            <tr><td class="in2"><svg class="b"><use href="#bang"/></svg><svg class="s"><use href="#mill"/></svg>使用轮廓模式所有精加工半径补偿</td><td></td><td><svg class="s"><use href="#tick"/></svg></td><td>D16</td><td>6</td></tr>
            <tr><td class="in2"><svg class="b"><use href="#bang"/></svg><svg class="s"><use href="#mill"/></svg>使用跟随部件模式添加精加工刀路所有精加工半径补...</td><td></td><td><svg class="s"><use href="#tick"/></svg></td><td>D16</td><td>6</td></tr>
            <tr><td class="in2"><svg class="b"><use href="#bang"/></svg><svg class="s"><use href="#mill"/></svg>使用跟随部件模式的原刀轨机床控制开始刀轨事件</td><td></td><td><svg class="s"><use href="#tick"/></svg></td><td>D16</td><td>6</td></tr>
            <tr><td class="in2"><svg class="b"><use href="#bang"/></svg><svg class="s"><use href="#zlevel"/></svg>等高铣原刀轨不延伸</td><td></td><td><svg class="s"><use href="#tick"/></svg></td><td>D16</td><td>6</td></tr>
            <tr class="sel"><td class="in2"><svg class="b"><use href="#bang"/></svg><svg class="s"><use href="#zlevel"/></svg>等高铣原刀轨不延伸所有精加工半径补偿</td><td></td><td><svg class="s"><use href="#tick"/></svg></td><td>D16</td><td>6</td></tr>
            <tr><td class="in2"><svg class="b"><use href="#tick"/></svg><svg class="s"><use href="#zlevel"/></svg>等高铣原刀轨不延伸机床控制半径补偿</td><td></td><td><svg class="s"><use href="#tick"/></svg></td><td>D16</td><td>6</td></tr>
          </tbody>
        </table>
        <div class="blank"><i></i><i></i><i></i><i></i><i></i></div>
        <div class="hscroll"><b>‹</b><i></i><b>›</b></div>
      </div>
      <div class="split"></div>
      <button class="fold">相关性<svg><use href="#chev"/></svg></button>
      <button class="fold">细节<svg><use href="#chev"/></svg></button>
    </section>

    <section class="view">
      <div class="doctabs"><span class="doc"><svg class="s"><use href="#pin"/></svg>刀具半径补偿练习用.prt<svg class="k" viewBox="0 0 8 8"><path d="M2 2h4v5H2zM4 1h3v3" fill="none" stroke="#fff" stroke-width="1.300"/></svg><svg class="k" viewBox="0 0 8 8"><path d="M1 1l6 6M7 1 1 7" stroke="#fff" stroke-width="2"/></svg></span></div>
      <svg class="canvas" viewBox="0 0 451 283" role="img" aria-label="刀轨视图">
        <defs>
          <linearGradient id="bg" x1="0" y1="0" x2="0" y2="1"><stop offset="0" stop-color="#232425"/><stop offset=".5" stop-color="#454648"/><stop offset=".75" stop-color="#565759"/><stop offset="1" stop-color="#58595b"/></linearGradient>
          <radialGradient id="ball" cx=".4" cy=".3" r=".7"><stop offset="0" stop-color="#7be08c"/><stop offset="1" stop-color="#1fa245"/></radialGradient>
        </defs>
        <path d="M0 0h451v283H0z" fill="url(#bg)"/>
        <path d="M400.500 0A259 259 0 0 1 401.500 283H451V0z" fill="#ffa306"/>
        <path d="M400.500 0A259 259 0 0 1 401.500 283" fill="none" stroke="#5c5580" stroke-width=".8"/>
        <circle cx="181.500" cy="142.300" r="121.800" fill="none" stroke="#14e8e8" stroke-width="1.600"/>
        <path d="M59.700 142.300A121.800 121.800 0 0 1 237 33.700" fill="none" stroke="#f6c010" stroke-width="1.800"/>
        <path d="M59.700 142.300H102" stroke="#f6b90c" stroke-width="1.700"/><circle cx="103" cy="142.300" r="2.200" fill="none" stroke="#dd8f2a"/>
        <path d="M89 166l17.500 39C91 210 78 206 73 195.500" fill="none" stroke="#f6cfd6" stroke-width="1.500"/>
        <path d="M105 203l4 4M109 203l-4 4" stroke="#c98245" stroke-width=".8"/>
        <path d="M181.500 142V97" stroke="#35a53a"/><path d="M179.500 105l2-9 2 9z" fill="#35a53a"/>
        <path d="M181.500 142.300H222" stroke="#c8282c"/><path d="M219 140.300l10 2-10 2z" fill="#d02a2e"/>
        <circle cx="181.500" cy="142.300" r="1.800" fill="#1148e8"/>
        <text x="183" y="95" fill="#3d9c40">YM</text><text x="221" y="140" fill="#d83a3e">XM</text><text x="182" y="142" fill="#2154e8">ZM</text>
        <path d="M24 248h10v10H24z" fill="#b6b7b8"/>
        <path d="M24 257.500V242" stroke="#35903a"/><path d="M22.500 247l1.500-6 1.500 6z" fill="#35903a"/><path d="M24 258h14" stroke="#c23538"/><path d="M35 256.500l5 1.500-5 1.500z" fill="#c23538"/>
        <circle cx="24" cy="258" r="1.800" fill="#dfe6ff" stroke="#2c5cf0"/>
        <text x="22" y="240" fill="#35903a">Y</text><text x="41" y="260" fill="#c23538">X</text>
        <circle cx="453" cy="231" r="10.500" fill="#d5ecd8"/><circle cx="453" cy="231" r="9.300" fill="url(#ball)"/>
        <text x="445" y="233" fill="#fff" class="pct">47</text>
      </svg>
    </section>
  </main>
  <footer class="status"><span>CAM 加工工序 等高铣原刀轨不延伸所有精加工半径补偿</span><svg class="s" viewBox="0 0 16 16"><path d="M1 2h14v12H1z" fill="#eef4fb" stroke="#8a97a8"/><path d="M4 4h8v7H4z" fill="#4f86c8"/></svg></footer>
  <div class="task"></div>
</div>

<svg class="mark" viewBox="50 28 219 249" role="img" aria-label="标志">
  <path d="M93 67 160 29l41 24c13 19 18 38 18 62l-59-34c-21-10-43-14-67-14z" fill="#d8effc"/>
  <path d="M204 54l63 37v61c-10 17-25 29-44 37v-74c-1-24-6-43-19-61z" fill="#8fd5f8"/>
  <path d="M267 156v58l-40 23c-24 2-45-3-64-15l60-30c20-9 34-19 44-36z" fill="#80c9f0"/>
  <path d="M224 239l-64 37-40-23c-12-18-18-37-18-62l58 33c20 12 41 16 64 15z" fill="#80d4fa"/>
  <path d="M116 251 52 214v-47c10-21 26-36 46-46v68c0 24 6 43 18 62z" fill="#a7ddf9"/>
  <path d="M52 163V91l38-22c24-1 46 3 66 14l-57 34c-20 9-36 24-47 46z" fill="#bfe7fc"/>
  <path d="M160 97l48 28-48 28-49-28z" fill="#bde6fb"/><path d="M111 127l48 28v53l-48-28z" fill="#a7ddf9"/><path d="M208 127l-47 28v53l47-28z" fill="#82c9ee"/>
</svg>
</body>
</html>
```

FILE: styles.css
```css
* { box-sizing: border-box; }

body {
  margin: 0;
  background: #fff;
  color: #222;
  font: 6px/9px "Noto Sans", "Noto Sans CJK SC", sans-serif;
}

button, input, select {
  margin: 0;
  padding: 0;
  border: 0;
  background: none;
  color: inherit;
  font: inherit;
}

h1, h2 { margin: 0; font: inherit; }
i { font-style: normal; }
svg { display: block; flex: none; }
.defs { position: absolute; width: 0; height: 0; }
.s { width: 9px; height: 9px; }

.caret {
  flex: none;
  width: 0;
  margin: 0 1px;
  border: 1px solid transparent;
  border-top: 2px solid #444;
  border-bottom: 0;
}
.bar { flex: none; width: 1px; height: 9px; background: #b4b4b4; }

.app {
  width: calc(75% + 1px);
  margin: 2px 0 0 2px;
  background: #d9d9d9;
  overflow: hidden;
}

/* title bar */
.titlebar {
  display: grid;
  grid-template-columns: 403fr 34fr 284fr;
  align-items: center;
  height: 13px;
  background: linear-gradient(#141414, #1d1d1d);
  color: #d4d4d4;
}
.titlebar h1 { white-space: nowrap; }
.quick { display: flex; align-items: center; padding-left: 1px; }
.quick button { display: flex; align-items: center; height: 11px; padding: 0 1px; white-space: nowrap; }
.quick .caret { border-top-color: #ccc; }
.quick .bar { margin-right: 1px; background: #3c3c3c; }
.winctl { display: flex; justify-content: flex-end; align-items: center; gap: 1px; padding-right: 1px; }
.winctl strong { margin-right: 10px; color: #fff; font: bold 6px "Open Sans", sans-serif; }
.winctl button { width: 9px; height: 9px; background: #333; }
.winctl svg { width: 9px; height: 9px; }
.winctl .close { background: #d9512c; }

/* ribbon tabs */
.tabs { display: flex; height: 12px; background: #1d1d1d; color: #d8d8d8; }
.tabs > button { flex: none; width: 22px; margin-right: 1px; white-space: nowrap; }
.tabs .file { width: 35px; background: linear-gradient(#2a6cb4, #1c4f92); color: #fff; }
.tabs .on { margin-right: 0; border-radius: 2px 2px 0 0; background: #ebebeb; color: #222; }
.tabs .wide { width: 30px; }
.tabs .wider { width: 42px; }
.tabs-end { display: flex; align-items: center; gap: 2px; margin-left: auto; padding-right: 2px; }
.tabs-end button { display: flex; align-items: center; margin-left: 1px; }
.find { display: flex; align-items: center; width: 64px; height: 9px; padding: 0 2px; margin-right: 2px; border: 1px solid #555; background: #292929; }
.find input { flex: 1; min-width: 0; height: 7px; }
.find input::placeholder { color: #999; opacity: 1; }
.find svg { width: 6px; height: 6px; }

/* ribbon */
.ribbon {
  display: flex;
  height: 44px;
  border-bottom: 1px solid #a8a8a8;
  background: linear-gradient(#efefef, #e0e0e0 60%, #cfcfcf);
}
.group { display: flex; flex-direction: column; min-width: 0; border-right: 1px solid #bdbdbd; }
.g-blade { flex: 102 1 0; }
.g-oper { flex: 20 1 0; }
.g-proc { flex: 151 1 0; }
.g-show { flex: 58 1 0; }
.g-anim { flex: 88 1 0; }
.g-work { flex: 64 1 0; }
.g-tools { flex: 46 1 0; }
.g-draft { flex: 31 1 0; }
.g-geo { flex: 60 1 0; }
.g-sync { flex: 57 1 0; }
.g-feat { flex: 22 1 0; }
.g-rest { flex: 22 1 0; border: 0; }
.body { display: flex; flex: 1; min-height: 0; }
.g-blade .body { padding: 0 2px; }
.g-proc .body { padding-left: 6px; }
.tool { display: flex; flex-direction: column; align-items: center; min-width: 0; padding-top: 2px; white-space: nowrap; }
.tool svg { width: 16px; height: 16px; margin-bottom: 1px; }
.tool .caret { margin-top: 1px; }
.w24 { flex: 23 1 0; }
.w28 { flex: 27 1 0; }
.w30 { flex: 30 1 0; }
.soft svg { padding: 1px; border: 1px solid #d8d8d8; border-radius: 1px; background: #e9e7ea; }
.stack { display: flex; flex: 11 1 0; flex-direction: column; gap: 2px; padding-top: 2px; }
.cap { display: flex; justify-content: center; align-items: center; height: 8px; color: #666; line-height: 8px; white-space: nowrap; }
.cap::before { content: ""; flex: 1; }
.cap::after { content: ""; order: 1; flex: 1; }
.cap .caret { order: 2; margin-right: 2px; }
.mini { display: grid; grid-auto-rows: 10px; flex: 1; align-content: start; padding-top: 1px; }
.mini button { display: flex; align-items: center; justify-self: start; height: 10px; }
.mini .boxed { outline: 1px solid #9a9a9a; background: #f7f7f7; }
.three { grid-template-columns: repeat(3, 1fr); padding-left: 6px; }
.two { grid-template-columns: repeat(2, 1fr); flex: 26 1 0; }
.four { grid-template-columns: repeat(4, 1fr); padding: 1px 1px 0 3px; }
.one { flex: 9 1 0; }
.playcol { display: flex; flex: 13 1 0; flex-direction: column; gap: 7px; padding: 5px 0 0 7px; }
.speed { display: flex; flex: 44 1 0; flex-direction: column; align-items: center; padding: 4px 4px 0 0; gap: 4px; }
.speed .combo { width: 100%; }
.g-work .mini { padding-left: 4px; }
.g-work .tool { flex: 38 1 0; }

.combo { position: relative; display: flex; height: 10px; border: 1px solid #9aa7b4; background: #fff; }
.combo select { flex: 1; min-width: 0; padding-left: 2px; appearance: none; line-height: 8px; }
.combo::before { content: ""; position: absolute; top: 0; right: 0; width: 8px; height: 8px; background: linear-gradient(#cde2f8, #7fb0e4); pointer-events: none; }
.combo::after { content: ""; position: absolute; top: 3px; right: 2px; border: 2px solid transparent; border-top: 3px solid #1c2c48; border-bottom: 0; pointer-events: none; }

/* selection toolbar */
.toolbar { display: flex; align-items: center; height: 15px; padding: 0 2px 0 5px; border-bottom: 1px solid #efefef; background: linear-gradient(#e2e2e2, #cfcfcf); }
.toolbar button { display: flex; flex: none; align-items: center; justify-content: center; }
.toolbar .c { width: 11px; height: 11px; }
.toolbar .boxed { border: 1px solid #a9b6c8; background: #f4f6fa; }
.toolbar .bar { margin: 0 3px; }
.toolbar .gap { margin: 0 5px; }
.toolbar .caret { margin-right: 2px; }
.toolbar .last { margin-left: auto; }
.filter { flex: 66 1 0; max-width: 66px; margin-right: 4px; }
.scope { flex: 70 1 0; max-width: 70px; margin-right: 3px; }

/* work area */
.work { display: flex; align-items: stretch; background: #ececec; }
.rail { display: flex; flex: none; flex-direction: column; align-items: flex-end; width: 15px; padding-right: 1px; background: #a2a2a2; }
.rail .gear { display: flex; justify-content: center; align-items: center; width: 15px; height: 15px; margin: 0 -1px 5px 0; background: #d9d9d9; }
.rail .t { display: flex; align-items: center; justify-content: center; width: 12px; height: 18px; margin-bottom: 1px; border: 1px solid #808080; border-right: 0; border-radius: 2px 0 0 2px; background: #dcdcdc; }
.rail .t svg { width: 11px; height: 11px; }
.rail .on { background: #f3f3f3; }
.rail .far { margin-top: 5px; }
.pager { display: flex; flex-direction: column; gap: 1px; width: 9px; margin-right: 2px; padding-top: 2px; }
.pager button { height: 6px; border: 1px solid #777; background: #e6e6e6; font-size: 5px; line-height: 4px; }

.nav { display: flex; flex: 247 1 0; flex-direction: column; min-width: 0; padding: 0 4px 2px 3px; background: #efefef; }
.nav h2 { display: flex; justify-content: space-between; align-items: center; height: 14px; padding: 0 2px; font-weight: bold; }
.nav h2 button { width: 6px; height: 6px; border: 1px solid #444; }
.grid { display: flex; flex: 1; flex-direction: column; border: 1px solid #a9a9a9; background: #fff; }
table { width: 100%; border-collapse: collapse; table-layout: fixed; }
.k1 { width: 20px; }
.k2 { width: 18px; }
.k3 { width: 23px; }
.k4 { width: 20px; }
th { height: 9px; padding: 0 2px; border-right: 1px solid #c6c6c6; background: linear-gradient(#fafafa, #d9d9d9); font-weight: normal; text-align: left; line-height: 8px; white-space: nowrap; }
th:last-child { padding: 0 1px; border: 0; }
td { height: 9px; padding: 0 2px; border-right: 1px solid #e6e6e6; line-height: 9px; white-space: nowrap; overflow: hidden; color: #444; }
td:first-child { padding-left: 1px; font-size: 5px; }
tr:first-child td:first-child, .in1:first-child, .in0:first-child { font-size: 6px; }
td:first-child, th:first-child { border-right: 1px solid #777; }
td:last-child { border: 0; }
tbody tr:nth-child(even) { background: #f5f5f5; }
td svg { display: inline-block; vertical-align: top; }
td:first-child .s { margin-right: 1px; }
td .b { width: 5px; height: 9px; margin-right: 2px; }
td .s { width: 8px; }
td.in1:first-child { padding-left: 7px; }
td.in0:first-child { padding-left: 1px; }
td.in2:first-child { padding-left: 17px; }
.exp { display: inline-block; width: 5px; height: 5px; margin: 2px 3px 0 0; border: 1px solid #bbb; border-radius: 50%; vertical-align: top; }
.in0 .b { margin-right: 1px; }
.cutter { display: block; width: 3px; height: 7px; margin: 0 2px; border: 1px solid #4a559a; background: #9aa4dc; }
.cur td { color: #8a3fd0; }
tbody .sel { background: #0a78d6; }
.sel td { color: #fff; border-color: #3f97e2; }
.blank { display: grid; flex: 1; grid-template-columns: 1fr 20px 18px 23px 20px; background: repeating-linear-gradient(#fff 0 9px, #f5f5f5 9px 18px); }
.blank i { border-right: 1px solid #e6e6e6; }
.blank i:first-child { border-color: #777; }
.blank i:last-child { border: 0; }
.hscroll { display: grid; grid-template-columns: 8px 156fr 76fr 8px; height: 8px; background: #f1f1f1; line-height: 7px; text-align: center; }
.hscroll i { margin: 1px 0; background: #cbcbcb; }
.hscroll b:last-child { grid-column: 4; }
.split { width: 48px; height: 2px; margin: 2px auto; border: 1px solid #b5b5b5; }
.fold { display: flex; justify-content: space-between; align-items: center; height: 10px; margin-bottom: 1px; padding: 0 3px 0 2px; border: 1px solid #cfcfcf; background: linear-gradient(#f7f7f7, #d9d9d9); color: #2e3160; }
.fold svg { width: 6px; height: 6px; }

.view { flex: 451 1 0; min-width: 0; }
.doctabs { height: 10px; border-bottom: 1px solid #777; }
.doc { display: inline-flex; align-items: center; gap: 2px; height: 9px; padding: 0 2px 0 1px; background: #4d4d4d; color: #eee; vertical-align: top; }
.doc .k { width: 5px; height: 5px; }
.canvas { width: 100%; height: auto; }
.canvas text { font: 6px "Noto Sans", sans-serif; }
.canvas .pct { font-weight: bold; }

.status { display: flex; align-items: center; height: 10px; background: #d9d9d9; color: #111; font-weight: bold; }
.status span { margin-left: 47%; white-space: nowrap; }
.status svg { margin: 0 3% 0 auto; }
.task { height: 4px; background: linear-gradient(90deg, #050505, #111 30%, #3b3d3c 55%, #050505 80%); }

.mark { width: 73px; height: auto; margin: 51px 0 0 calc(70% + 5px); }
```
